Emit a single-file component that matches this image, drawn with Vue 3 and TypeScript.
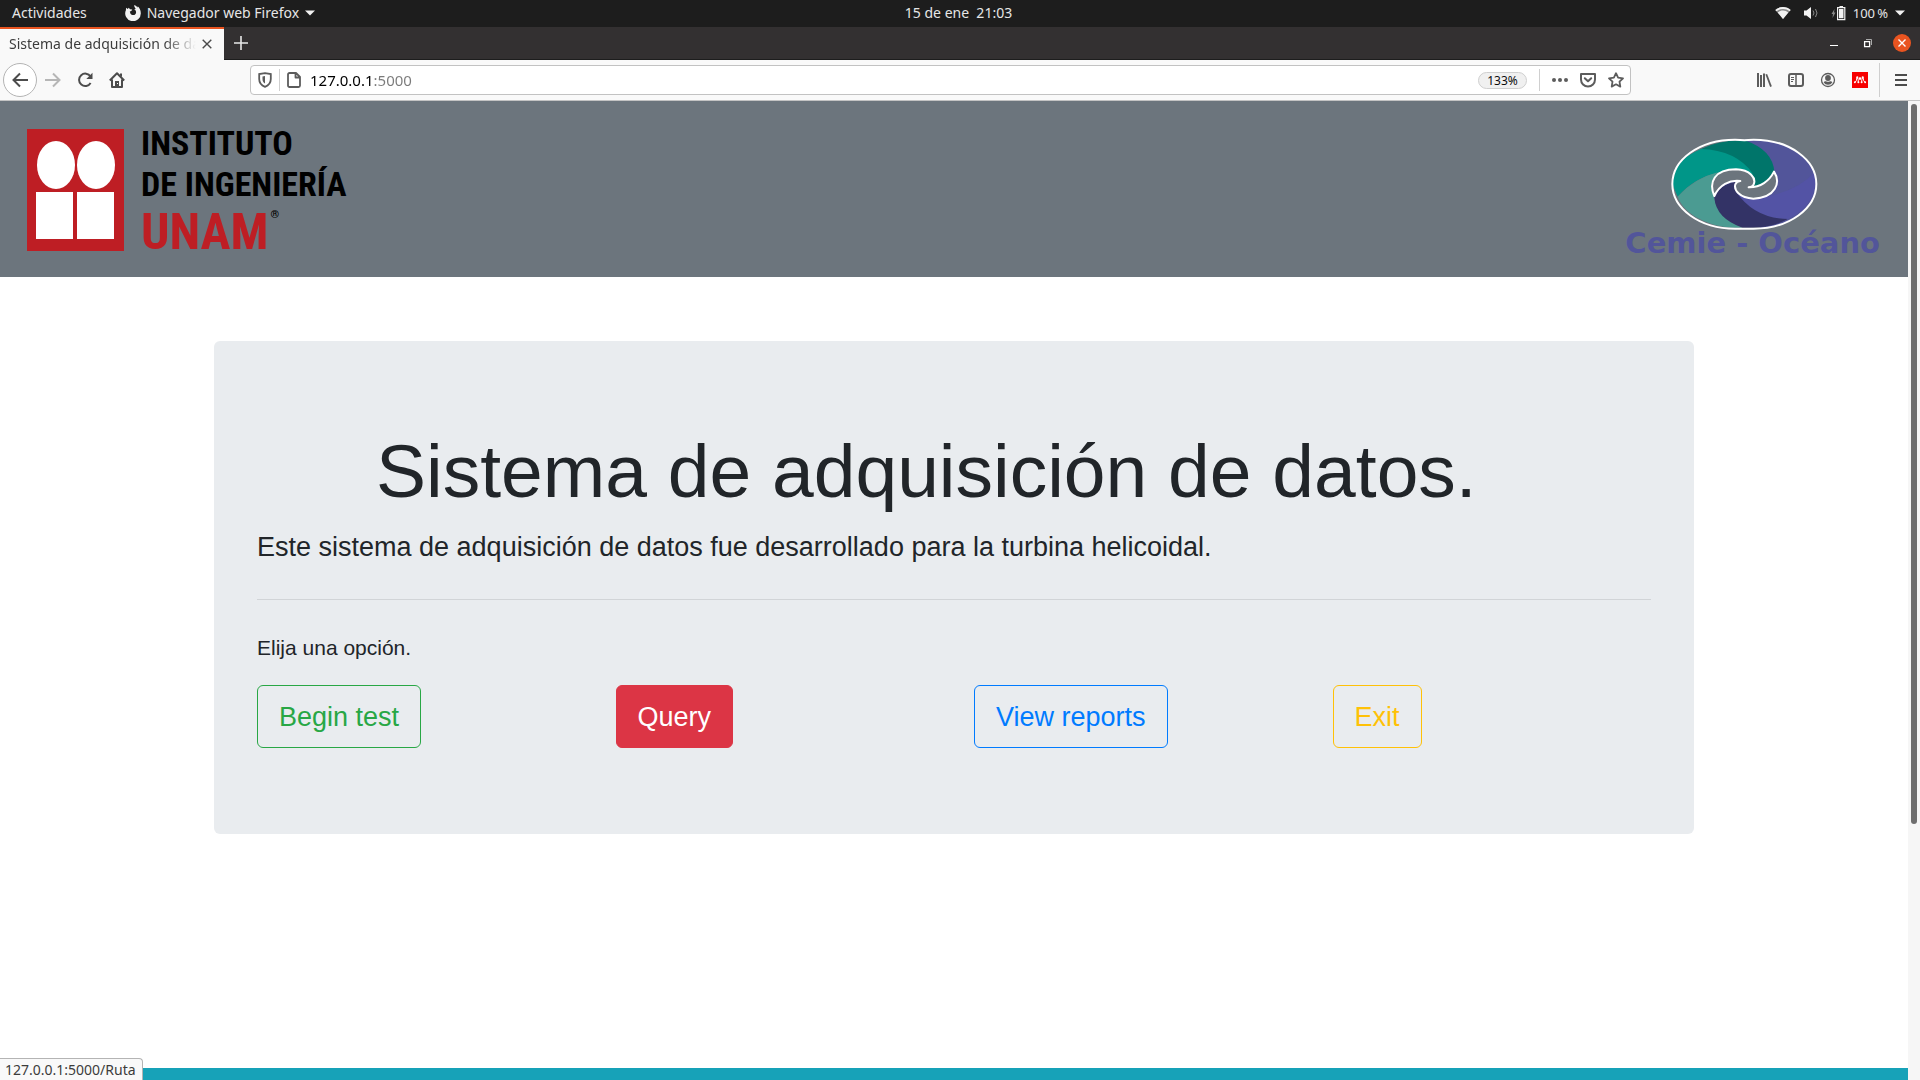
<script setup lang="ts">
import { ref } from 'vue'

interface Option {
  label: string
  tone: string
  href: string
}

const url = ref('127.0.0.1:5000')

const options: Option[] = [
  { label: 'Begin test', tone: 'success', href: '#begin' },
  { label: 'Query', tone: 'danger', href: '#Ruta' },
  { label: 'View reports', tone: 'primary', href: '#reports' },
  { label: 'Exit', tone: 'warning', href: '#exit' },
]
</script>

<template>
  <div class="screen">
    <!-- Desktop top bar -->
    <header class="panel">
      <div class="panel-side">
        <button class="panel-item">Actividades</button>
        <button class="panel-item app-menu">
          <svg width="16" height="16" viewBox="0 0 16 16" aria-hidden="true">
            <path fill="#f2f2f2" d="M1.2 2.8 2.6 4l1.2-1.3L5 4.300l2.300.3-1 1.300-1.500.6.7 2.200c1 1.700 3.800 1.900 5 .2 1.200-1.700.4-3.800-1.200-4.700.6-.2 1.100-.1 1.600.1C10.300 2.700 9 2 9.300.1c1.500.5 2.300 1.700 3.300 2.300.2-.4.1-.8 0-1.100 2 1.500 3.200 4 3.200 6.700A7.800 7.800 0 1 1 .9 5.200c0-.9.100-1.700.3-2.400Z" />
          </svg>
          <span>Navegador web Firefox</span>
          <svg width="10" height="6" viewBox="0 0 10 6" aria-hidden="true"><path fill="#f2f2f2" d="M0 .5h10L5 5.500Z" /></svg>
        </button>
      </div>
      <button class="panel-item clock">15 de ene&nbsp; 21:03</button>
      <div class="panel-side panel-end">
        <button class="panel-item tray" aria-label="Sistema">
          <svg width="16" height="14" viewBox="0 0 16 14" aria-hidden="true">
            <path fill="#8a8a8a" d="M8 1C5 1 2.300 2.100.3 3.900L8 13l7.700-9.100C13.700 2.100 11 1 8 1Z" />
            <path fill="#f2f2f2" d="M8 1C5 1 2.300 2.100.3 3.900l1.200 1.400C3.300 3.800 5.500 3 8 3s4.700.8 6.500 2.300l1.200-1.400C13.700 2.100 11 1 8 1Zm0 3.600c-2 0-3.900.7-5.300 1.900L8 13l5.300-6.500A8.300 8.300 0 0 0 8 4.600Z" />
          </svg>
          <svg width="16" height="14" viewBox="0 0 16 14" aria-hidden="true">
            <path fill="#f2f2f2" d="M1 4.500h2.500L8 1v12L3.500 9.500H1Z" />
            <path fill="none" stroke="#8a8a8a" d="M10 4.500q2 2.500 0 5M12.500 3q3 4 0 8" />
          </svg>
          <svg width="15" height="16" viewBox="0 0 15 16" aria-hidden="true">
            <path fill="#8a8a8a" d="M3.500 4 .5 9H2l-.5 4 3-5.500H3Z" />
            <path fill="none" stroke="#f2f2f2" stroke-width="1.200" d="M6.600 2.600h7.200v12H6.600Z" />
            <path fill="#f2f2f2" d="M8.500 1h3.500v1.500H8.500zM8 4h4.500v9.200H8Z" />
          </svg>
          <span class="percent">100&#8201;%</span>
          <svg width="10" height="6" viewBox="0 0 10 6" aria-hidden="true"><path fill="#f2f2f2" d="M0 .5h10L5 5.500Z" /></svg>
        </button>
      </div>
    </header>

    <!-- Browser tab strip -->
    <div class="tabs">
      <div class="tab">
        <span class="tab-title">Sistema de adquisición de datos</span>
        <button class="icon tab-close" aria-label="Cerrar pestaña">
          <svg width="10" height="10" viewBox="0 0 10 10"><path fill="none" stroke="#4a4a4a" stroke-width="1.400" d="m.7.7 8.600 8.600M9.300.7.7 9.300" /></svg>
        </button>
      </div>
      <button class="icon new-tab" aria-label="Nueva pestaña">
        <svg width="14" height="14" viewBox="0 0 14 14"><path stroke="#e8e8e8" stroke-width="1.600" d="M7 0v14M0 7h14" /></svg>
      </button>
      <div class="window-buttons">
        <button class="icon" aria-label="Minimizar">
          <svg width="18" height="18" viewBox="0 0 18 18"><path fill="#fff" d="M5 11h8v1H5z" /></svg>
        </button>
        <button class="icon" aria-label="Restaurar">
          <svg width="18" height="18" viewBox="0 0 18 18"><path fill="none" stroke="#fff" stroke-width="1.300" d="M5.600 7.600h5v5h-5z" /><path fill="none" stroke="#aaa" d="M7 5.500h5.500V11" /></svg>
        </button>
        <button class="icon" aria-label="Cerrar ventana">
          <svg width="18" height="18" viewBox="0 0 18 18"><circle cx="9" cy="9" r="9" fill="#e95420" /><path stroke="#fff" stroke-width="1.400" d="m5.500 5.500 7 7m0-7-7 7" /></svg>
        </button>
      </div>
    </div>

    <!-- Navigation toolbar -->
    <div class="toolbar">
      <nav class="nav-buttons">
        <button class="icon back" aria-label="Atrás">
          <svg width="16" height="16" viewBox="0 0 16 16"><path fill="none" stroke="#4c4c4c" stroke-width="2" d="M16 8H1.500M8 1.500 1.500 8 8 14.500" /></svg>
        </button>
        <button class="icon" aria-label="Adelante" disabled>
          <svg width="16" height="16" viewBox="0 0 16 16"><path fill="none" stroke="#b6b6b6" stroke-width="2" d="M0 8h14.500M8 1.500 14.500 8 8 14.500" /></svg>
        </button>
        <button class="icon" aria-label="Recargar">
          <svg width="16" height="16" viewBox="0 0 16 16"><path fill="none" stroke="#4c4c4c" stroke-width="2" d="M13.500 4.500A6.200 6.200 0 1 0 13.600 11" /><path fill="#4c4c4c" d="M15.500.8V7H9.300Z" /></svg>
        </button>
        <button class="icon" aria-label="Inicio">
          <svg width="16" height="16" viewBox="0 0 16 16"><path fill="none" stroke="#4c4c4c" stroke-width="2" stroke-linejoin="round" d="M.8 8.500 8 1.300l7.200 7.200M3 7.500V15h10V7.500" /><path fill="#4c4c4c" d="M6 9h4v5H6zM11 1.500h2V5l-2-1.500Z" /><path fill="#f9f9f9" d="M8 11h1v1H8z" /></svg>
        </button>
      </nav>

      <div class="address">
        <button class="icon" aria-label="Protección">
          <svg width="14" height="16" viewBox="0 0 14 16"><path fill="none" stroke="#5c5c5c" stroke-width="1.800" d="M7 1.200 12.800 2v5c0 4-2.500 6.500-5.800 7.800C3.700 13.500 1.200 11 1.200 7V2Z" /><path fill="#5c5c5c" d="M7 4v7.600C5.300 10.600 4.500 9 4.500 7V4.400Z" /></svg>
        </button>
        <span class="rule"></span>
        <button class="icon" aria-label="Información del sitio">
          <svg width="14" height="16" viewBox="0 0 14 16"><path fill="none" stroke="#5c5c5c" stroke-width="1.800" stroke-linejoin="round" d="M3 1h6l4 4v8.500a1.500 1.500 0 0 1-1.500 1.500H2.500A1.500 1.500 0 0 1 1 13.500v-11A1.500 1.500 0 0 1 2.500 1ZM8.500 1v4.500H13" /></svg>
        </button>
        <input v-model="url" class="url" type="text" aria-label="Dirección" spellcheck="false" />
        <button class="zoom-level">133%</button>
        <span class="rule"></span>
        <button class="icon dots" aria-label="Acciones de página">
          <svg width="16" height="16" viewBox="0 0 16 16"><g fill="#5c5c5c"><circle cx="2" cy="8" r="2" /><circle cx="8" cy="8" r="2" /><circle cx="14" cy="8" r="2" /></g></svg>
        </button>
        <button class="icon" aria-label="Guardar en Pocket">
          <svg width="16" height="16" viewBox="0 0 16 16"><path fill="none" stroke="#5c5c5c" stroke-width="2" stroke-linejoin="round" d="M1 2h14v5.500a7 7 0 0 1-14 0Z" /><path fill="none" stroke="#5c5c5c" stroke-width="2" stroke-linecap="round" stroke-linejoin="round" d="M4.800 6.200 8 9.300l3.200-3.100" /></svg>
        </button>
        <button class="icon" aria-label="Añadir a marcadores">
          <svg width="16" height="16" viewBox="0 0 16 16"><path fill="none" stroke="#5c5c5c" stroke-width="1.800" stroke-linejoin="round" d="m8 1.200 2.100 4.400 4.900.7-3.500 3.400.8 4.900L8 12.300l-4.300 2.300.8-4.900L1 6.300l4.900-.7Z" /></svg>
        </button>
      </div>

      <div class="tools">
        <button class="icon" aria-label="Biblioteca">
          <svg width="16" height="16" viewBox="0 0 16 16"><path fill="#5c5c5c" d="M1 1h2v14H1zM4 3h2v12H4zM7 1.500h2V15H7z" /><path stroke="#5c5c5c" stroke-width="1.800" d="m10.300 2.300 4.700 12.300" /></svg>
        </button>
        <button class="icon" aria-label="Barra lateral">
          <svg width="16" height="16" viewBox="0 0 16 16"><rect x="1" y="2" width="14" height="12" rx="2" fill="none" stroke="#5c5c5c" stroke-width="2" /><path stroke="#5c5c5c" stroke-width="1.500" d="M8 2v12" /><path stroke="#5c5c5c" d="M3 5.500h3M3 7.500h3M3 9.500h2" /></svg>
        </button>
        <button class="icon" aria-label="Cuenta">
          <svg width="16" height="16" viewBox="0 0 16 16"><circle cx="8" cy="8" r="6.500" fill="none" stroke="#5c5c5c" stroke-width="1.300" /><circle cx="8" cy="6" r="2.900" fill="#5c5c5c" /><path fill="#5c5c5c" d="M3.600 10.200q1-1.200 2.400-.9 2 1 4 0 1.400-.3 2.400.9a5 5 0 0 1-8.800 0Z" /></svg>
        </button>
        <button class="icon" aria-label="Mendeley">
          <svg width="16" height="16" viewBox="0 0 16 16"><path fill="#f70000" d="M0 0h16v16H0z" /><g fill="#fff"><circle cx="5.300" cy="5.300" r="1.100" /><circle cx="10.700" cy="5.300" r="1.100" /><circle cx="8" cy="6.600" r="1.300" /><circle cx="2.900" cy="10.200" r="1" /><circle cx="13.100" cy="10.200" r="1" /><circle cx="6.400" cy="10.200" r="1" /><circle cx="9.600" cy="10.200" r="1" /></g><path fill="none" stroke="#fff" d="M3.300 10Q4.800 9 4.900 5.500M12.700 10Q11.200 9 11.100 5.500M6.300 10Q6.600 7.500 5.300 5.500M9.700 10q-.3-2.500 1-4.500" /></svg>
        </button>
        <span class="rule tall"></span>
        <button class="icon" aria-label="Menú">
          <svg width="16" height="16" viewBox="0 0 16 16"><path fill="#4c4c4c" d="M2 2h12v2H2zM2 7h12v2H2zM2 12h12v2H2z" /></svg>
        </button>
      </div>
    </div>

    <!-- Page shown in the browser -->
    <div class="viewport">
      <div class="page">
        <header class="banner">
          <div class="unam">
            <svg width="97" height="122" viewBox="0 0 97 122" aria-hidden="true">
              <path fill="#be1e24" d="M0 0h97v122H0z" />
              <g fill="#fff">
                <ellipse cx="29" cy="36" rx="19" ry="24" />
                <ellipse cx="69" cy="36" rx="19" ry="24" />
                <path d="M9 63h37v47H9zM50 63h37v47H50z" />
              </g>
            </svg>
            <div class="unam-text">
              <span>INSTITUTO</span>
              <span>DE INGENIERÍA</span>
              <div class="unam-name"><span>UNAM</span><span class="mark">®</span></div>
            </div>
          </div>

          <div class="cemie">
            <svg width="147" height="92" viewBox="210 129 441 276" aria-hidden="true">
              <path fill="#52559a" d="M430 134C580 128 646 205 646 267S590 390 480 400L340 308 365 200Z" />
              <path fill="#5353a5" d="M400 285Q430 320 480 308Q590 290 640 232C655 300 610 350 560 372Q460 372 400 285Z" />
              <path fill="#00756a" d="M300 162Q360 132 435 137Q515 165 520 230Q500 272 443 277L440 225Z" />
              <path fill="#009688" d="M300 162Q210 200 214 267L230 305Q280 250 345 235L400 222 456 236Q405 165 300 162Z" />
              <path fill="#4b9b92" d="M230 305C250 360 330 402 425 398Q350 370 340 308L330 270 350 232Q280 250 230 305Z" />
              <path fill="#333366" d="M340 308Q355 265 418 258Q398 268 405 290Q460 370 560 372Q510 402 425 398Q345 370 340 308Z" />
              <g fill="none" stroke="#fff" stroke-width="6" stroke-linecap="round" stroke-linejoin="round">
                <path d="M430 136Q418 134 402 134C295 134 214 194 214 267S295 401 402 401H458C565 401 646 340 646 267S565 134 458 134Q440 134 430 136" />
                <path fill="#6c757d" d="M340 303C322 262 340 223 405 223C448 224 466 250 458 268Q454 276 443 277C478 278 505 258 519 230C540 262 525 308 457 311C415 308 398 285 403 268Q407 259 418 258C385 254 355 270 340 303Z" />
              </g>
            </svg>
            <span class="cemie-text">Cemie - Océano</span>
          </div>
        </header>

        <main class="container">
          <section class="jumbotron">
            <h1>Sistema de adquisición de datos.</h1>
            <p class="lead">Este sistema de adquisición de datos fue desarrollado para la turbina helicoidal.</p>
            <hr />
            <p>Elija una opción.</p>
            <div class="options">
              <div v-for="option in options" :key="option.label">
                <a class="btn" :class="option.tone" :href="option.href">{{ option.label }}</a>
              </div>
            </div>
          </section>
        </main>

        <footer class="footer"></footer>
        <div class="status">127.0.0.1:5000/Ruta</div>
      </div>
      <div class="scrollbar"><div class="thumb"></div></div>
    </div>
  </div>
</template>

<style>
body {
  margin: 0;
}
</style>

<style scoped>
.screen {
  display: flex;
  flex-direction: column;
  min-height: 100vh;
  font: 14px/20px "Noto Sans", sans-serif;
  background: #fff;
}

.screen *,
.screen {
  box-sizing: border-box;
}

button {
  margin: 0;
  padding: 0;
  border: 0;
  background: none;
  font: inherit;
  color: inherit;
}

svg {
  display: block;
  flex: none;
}

.icon {
  display: flex;
  align-items: center;
  justify-content: center;
  flex: none;
}

.panel {
  display: flex;
  align-items: center;
  height: 27px;
  padding: 0 15px 1px 12px;
  background: #1d1d1d;
  color: #e6e6e6;
}

.panel-side {
  display: flex;
  flex: 1;
  gap: 38px;
}

.panel-end {
  justify-content: flex-end;
}

.app-menu {
  display: flex;
  align-items: center;
  gap: 6px;
}

.tray {
  display: flex;
  align-items: center;
  gap: 12px;
}

.percent {
  margin: 0 -5px;
  font-size: 13px;
}

.tabs {
  display: flex;
  height: 33px;
  background: #333031;
  border-bottom: 1px solid #1d1d1d;
}

.tab {
  display: flex;
  align-items: center;
  width: 224px;
  height: 33px;
  padding: 0 12px 2px 9px;
  border-top: 2px solid #e95420;
  background: #f9f9f9;
  color: #3c3c3c;
}

.tab-title {
  flex: 1;
  overflow: hidden;
  white-space: nowrap;
  mask-image: linear-gradient(to left, transparent, #000 32px);
}

.tab-close {
  margin-left: 6px;
}

.new-tab {
  width: 34px;
}

.window-buttons {
  display: flex;
  align-items: center;
  gap: 16px;
  margin-left: auto;
  padding-right: 9px;
}

.toolbar {
  display: flex;
  align-items: center;
  height: 41px;
  background: #f9f9f9;
  border-bottom: 1px solid #c4c4c4;
}

.nav-buttons {
  display: flex;
  align-items: center;
  gap: 16px;
  width: 250px;
  padding-left: 3px;
}

.back {
  width: 34px;
  height: 34px;
  margin-right: -8px;
  border: 1px solid #b4b4b4;
  border-radius: 50%;
  background: #fff;
}

.address {
  display: flex;
  flex: 1;
  align-items: center;
  gap: 7px;
  height: 30px;
  padding: 0 6px 0 7px;
  border: 1px solid #c2c2c2;
  border-radius: 4px;
  background: #fff;
}

.rule {
  width: 1px;
  height: 22px;
  background: #cfcfcf;
}

.url {
  flex: 1;
  min-width: 0;
  height: 24px;
  padding: 0 2px;
  border: 0;
  outline: 0;
  background: linear-gradient(to right, #000 65px, #7a7a7a 65px);
  -webkit-background-clip: text;
  background-clip: text;
  color: transparent;
  font: 15px/24px "Noto Sans", sans-serif;
}

.zoom-level {
  width: 49px;
  height: 17px;
  margin-right: 5px;
  border: 1px solid #cfcfcf;
  border-radius: 9px;
  background: #f0f0f0;
  color: #0c0c0d;
  font-size: 12px;
  line-height: 15px;
}

.dots {
  margin: 0 5px;
}

.address .icon:last-child {
  margin-left: 5px;
}

.tools {
  display: flex;
  align-items: center;
  justify-content: flex-end;
  gap: 16px;
  width: 289px;
  padding-right: 11px;
}

.tall {
  height: 34px;
  margin: 0 -3px 0 -5px;
}

.viewport {
  display: flex;
  flex: 1;
}

.page {
  position: relative;
  display: flex;
  flex: 1;
  flex-direction: column;
  color: #212529;
  font: 21px/32px "Liberation Sans", Arial, sans-serif;
}

.banner {
  display: flex;
  justify-content: space-between;
  height: 176px;
  padding: 22px 28px 0 27px;
  background: #6c757d;
}

.unam {
  display: flex;
  gap: 17px;
}

.unam svg {
  margin-top: 6px;
}

.unam-text {
  display: flex;
  flex-direction: column;
  color: #000;
  font: bold 34px/41px "Roboto Condensed", "Liberation Sans Narrow", sans-serif;
  white-space: nowrap;
}

.unam-name {
  display: flex;
  gap: 2px;
  color: #be1e24;
  font-size: 50px;
  line-height: 54px;
}

.mark {
  color: #000;
  font-size: 11px;
  line-height: 20px;
}

.cemie {
  display: flex;
  flex-direction: column;
  align-items: center;
  padding-top: 15px;
}

.cemie svg {
  margin-right: 16px;
}

.cemie-text {
  color: #52559a;
  font: bold 29px/26px "DejaVu Sans", sans-serif;
  white-space: nowrap;
}

.container {
  width: 100%;
  max-width: 1520px;
  margin: 64px auto;
  padding: 0 20px;
}

.jumbotron {
  padding: 85px 43px 86px;
  border-radius: 6px;
  background: #e9ecef;
}

h1 {
  margin: 0 0 11px;
  padding-left: 119px;
  font-size: 75px;
  font-weight: normal;
  line-height: 90px;
}

p {
  margin: 0 0 21px;
}

.lead {
  margin: 0;
  font-size: 27px;
  line-height: 40px;
}

hr {
  margin: 32px 0;
  border: 0;
  border-top: 1px solid #d1d4d7;
}

.options {
  display: grid;
  grid-template-columns: repeat(4, 1fr);
  column-gap: 40px;
}

.btn {
  display: inline-block;
  padding: 12px 21px 10px;
  border: 1px solid currentColor;
  border-radius: 6px;
  font-size: 27px;
  line-height: 39px;
  text-decoration: none;
  white-space: nowrap;
  vertical-align: top;
}

.success {
  color: #28a745;
}

.danger {
  border-color: #dc3545;
  background: #dc3545;
  color: #fff;
}

.primary {
  color: #007bff;
}

.warning {
  color: #ffc107;
}

.footer {
  height: 12px;
  margin-top: auto;
  background: #17a2b8;
}

.status {
  position: absolute;
  bottom: 0;
  left: 0;
  padding: 0 6px 0 5px;
  border: solid #b4b4b4;
  border-width: 1px 1px 0 0;
  border-radius: 0 4px 0 0;
  background: #f9f9f9;
  color: #3c3c3c;
  font: 14px/21px "Noto Sans", sans-serif;
}

.scrollbar {
  width: 12px;
  padding: 3px;
  background: #f6f6f6;
}

.thumb {
  width: 6px;
  height: 74%;
  border-radius: 3px;
  background: #6e6e6e;
}
</style>
